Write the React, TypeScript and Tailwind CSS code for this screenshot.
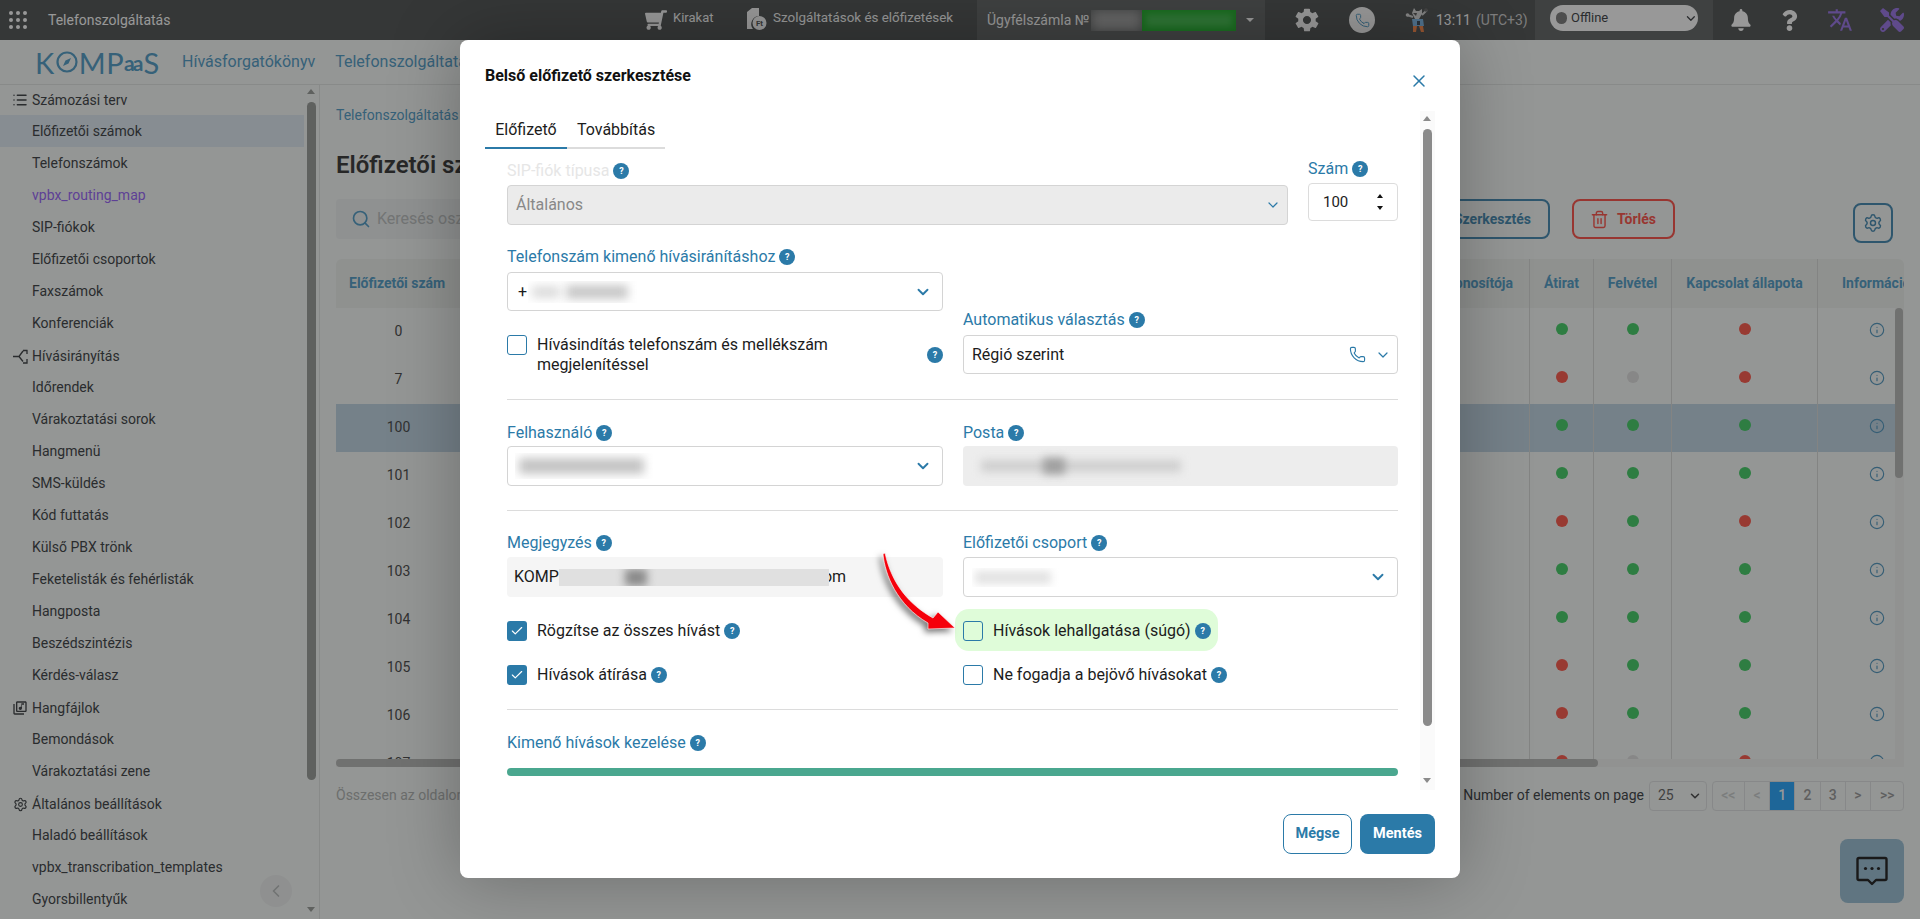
import React from "react";
import { Check, ChevronDown, ChevronLeft, Info, List, Phone, Search, Settings, Trash2, X } from "lucide-react";
import { FaBell, FaQuestion, FaShoppingCart, FaTools } from "react-icons/fa";
import { IoMdSettings } from "react-icons/io";
import { MdOutlineLibraryMusic, MdTranslate } from "react-icons/md";

type Dot = "g" | "r" | "n";

const rows: { n: string; a: Dot; b: Dot; c: Dot }[] = [
  { n: "0", a: "g", b: "g", c: "r" },
  { n: "7", a: "r", b: "n", c: "r" },
  { n: "100", a: "g", b: "g", c: "g" },
  { n: "101", a: "g", b: "g", c: "g" },
  { n: "102", a: "r", b: "g", c: "r" },
  { n: "103", a: "g", b: "g", c: "g" },
  { n: "104", a: "g", b: "g", c: "g" },
  { n: "105", a: "r", b: "g", c: "g" },
  { n: "106", a: "r", b: "g", c: "g" },
  { n: "107", a: "r", b: "n", c: "r" },
];

function StatusDot({ v }: { v: Dot }) {
  const cls = v === "g" ? "bg-[#2ac852]" : v === "r" ? "bg-[#ff4232]" : "bg-[#dcdcdc]";
  return <span className={`block h-3 w-3 rounded-full ${cls}`} />;
}

function Help() {
  return (
    <span className="flex h-4 w-4 shrink-0 items-center justify-center rounded-full bg-[#2b7aa8] text-[9px] font-bold leading-none text-white">
      ?
    </span>
  );
}

function Label({ children, muted }: { children: React.ReactNode; muted?: boolean }) {
  return (
    <div className={`flex h-5 items-center gap-1 text-[16px] leading-5 ${muted ? "text-[#e6e6e6]" : "text-[#2b7aa8]"}`}>
      <span>{children}</span>
      <Help />
    </div>
  );
}

function Smudge({ className, children }: { className: string; children: React.ReactNode }) {
  return <div className={`relative z-10 overflow-hidden ${className}`}>{children}</div>;
}

function Chev({ thin }: { thin?: boolean }) {
  return <ChevronDown className="text-[#2b7aa8]" size={thin ? 16 : 18} strokeWidth={thin ? 1.8 : 2.5} />;
}

function Box({ checked }: { checked?: boolean }) {
  return checked ? (
    <span className="flex h-5 w-5 shrink-0 items-center justify-center rounded-[3px] bg-[#2b7aa8] text-white">
      <Check size={14} strokeWidth={2} />
    </span>
  ) : (
    <span className="block h-5 w-5 shrink-0 rounded-[3px] border border-[#2b7aa8]" />
  );
}

function SideItem({ children, active, purple }: { children: React.ReactNode; active?: boolean; purple?: boolean }) {
  return (
    <div
      className={`flex h-8 items-center pl-8 text-[14px] ${active ? "bg-[#dce8f2]" : ""} ${purple ? "text-[#8a4ef8]" : "text-[#22262a]"}`}
    >
      {children}
    </div>
  );
}

function SideHead({ icon, children, first }: { icon: React.ReactNode; children: React.ReactNode; first?: boolean }) {
  return (
    <div className={`flex h-[30px] items-center text-[14px] text-[#22262a] ${first ? "" : "mt-[2px]"}`}>
      <span className="flex w-8 shrink-0 justify-end pr-[4px]">{icon}</span>
      {children}
    </div>
  );
}

function Page({ children, w, active, faint }: { children: React.ReactNode; w: string; active?: boolean; faint?: boolean }) {
  return (
    <div
      className={`flex items-center justify-center border-r border-[#dcdfe0] text-[14px] font-medium last:border-r-0 ${w} ${
        active ? "bg-[#0a9aff] text-white" : faint ? "text-[#c4c8c8]" : "text-[#8c8c8c]"
      }`}
    >
      {children}
    </div>
  );
}

function Mascot() {
  return (
    <svg width="24" height="28" viewBox="0 0 24 28" className="shrink-0">
      <path d="M2 9l6 2M22 4l-5 5" stroke="#d0d0d0" strokeWidth="2" />
      <circle cx="2.5" cy="9" r="1.8" fill="#d8d8d8" />
      <circle cx="21" cy="4" r="1.8" fill="#555" />
      <path d="M7 7l2-5 2 3h3l3-2 0 5-3 5h-4z" fill="#d8d8d8" />
      <path d="M8 7h4l-1 3z" fill="#444" />
      <path d="M7 13h11l1 7H8z" fill="#6fb0e6" />
      <path d="M12 15h3v4h-3z" fill="#234" />
      <path d="M8 20h4l-1 6H8zM14 20h4l1 6h-3z" fill="#ff7a30" />
    </svg>
  );
}

function TopBar() {
  return (
    <header className="flex h-10 shrink-0 items-stretch whitespace-nowrap bg-[#383c3c] text-white">
      <div className="ml-[9px] grid h-10 w-[18px] shrink-0 grid-cols-3 content-center gap-[3px]">
        {Array.from({ length: 9 }).map((_, i) => (
          <span key={i} className="h-1 w-1 rounded-full bg-white" />
        ))}
      </div>
      <div className="ml-[21px] flex w-[122px] items-center text-[14px]">Telefonszolgáltatás</div>
      <div className="ml-[475px] flex items-center">
        <FaShoppingCart size={22} className="-scale-x-100" />
      </div>
      <div className="ml-[6px] flex w-[41px] items-center pb-[4px] text-[13px]">Kirakat</div>
      <div className="ml-[31px] flex items-center">
        <svg width="22" height="24" viewBox="0 0 22 24" fill="white">
          <path d="M2 4l5-4h7v8a8 8 0 0 0-6 13H2z" />
          <circle cx="14.5" cy="15" r="7" />
          <text x="14.5" y="18" fontSize="8" fontWeight="700" textAnchor="middle" fill="#383c3c">Ft</text>
        </svg>
      </div>
      <div className="ml-[6px] flex w-[174px] items-center pb-[4px] text-[13.4px]">Szolgáltatások és előfizetések</div>
      <div className="ml-[30px] flex w-[288px] shrink-0 items-center bg-[#4c5050] pl-[10px] text-[14px]">
        <span className="w-[104px] overflow-hidden">Ügyfélszámla №</span>
        <Smudge className="h-[21px] w-[51px] shrink-0">
          <div className="absolute inset-0 bg-[#9a9a9a] blur-[6px]" />
        </Smudge>
        <Smudge className="h-[21px] w-[94px] shrink-0 bg-[#00a40c]">
          <div className="absolute left-[4px] right-[4px] top-[4px] h-[13px] bg-[#2ab838] blur-[3px]" />
        </Smudge>
        <span className="ml-[10px] h-0 w-0 border-x-[4px] border-t-[4px] border-x-transparent border-t-white" />
      </div>
      <div className="ml-[28px] flex items-center">
        <IoMdSettings size={28} />
      </div>
      <div className="ml-[28px] flex items-center">
        <span className="flex h-[26px] w-[26px] items-center justify-center rounded-full bg-white">
          <Phone size={15} strokeWidth={1.6} className="text-[#3a90c0]" />
        </span>
      </div>
      <div className="ml-[30px] flex items-center">
        <Mascot />
      </div>
      <div className="ml-[7px] flex w-[85px] items-center text-[14px]">
        13:11 <span className="ml-[5px] text-[#c8c8c8]">(UTC+3)</span>
      </div>
      <div className="ml-[14px] flex w-[178px] shrink-0 items-start bg-[#4c5050] pl-[15px] pt-[5px]">
        <div className="flex h-[26px] w-[148px] items-center rounded-full bg-white pl-[6px] text-[13px] text-[#22262a]">
          <span className="h-3 w-3 rounded-full bg-[#6a6a6a]" />
          <span className="ml-[4px]">Offline</span>
          <ChevronDown size={15} strokeWidth={2.2} className="ml-[76px] text-[#22262a]" />
        </div>
      </div>
      <div className="ml-[17px] flex items-center">
        <FaBell size={22} />
      </div>
      <div className="ml-[27px] flex items-center">
        <FaQuestion size={21} />
      </div>
      <div className="ml-[27px] flex items-center text-[#8c62e4]">
        <MdTranslate size={26} />
      </div>
      <div className="ml-[27px] flex items-center text-[#8c62e4]">
        <FaTools size={24} />
      </div>
    </header>
  );
}

function SubHeader() {
  return (
    <div className="flex h-[45px] shrink-0 items-center border-b border-[#dfe3e1] text-[16px] text-[#3a90c0]">
      <div className="ml-[35px] flex h-[44px] w-[125px] items-center font-[Lato,sans-serif] text-[29px] font-normal leading-none tracking-[0.5px] text-[#3a90c0]">
        <span>K</span>
        <svg width="22" height="22" viewBox="0 0 22 22" className="mx-[1px] shrink-0" fill="none" stroke="#3a90c0" strokeWidth="2.2">
          <circle cx="11" cy="11" r="9.5" />
          <path d="M15 7l-2.5 5.5L7 15l2.5-5.5z" fill="#3a90c0" stroke="none" />
        </svg>
        <span>MP</span>
        <span className="text-[21px] font-bold tracking-[-2px]">aa</span>
        <span className="ml-[2px]">S</span>
      </div>
      <div className="ml-[22px]">Hívásforgatókönyv</div>
      <div className="ml-[20px]">Telefonszolgáltatás</div>
    </div>
  );
}

function Sidebar() {
  return (
    <aside className="relative w-[320px] shrink-0 overflow-hidden border-r border-[#dfe3e1]">
      <div className="w-[304px]">
        <SideHead first icon={<List size={16} strokeWidth={2.2} />}>Számozási terv</SideHead>
        <SideItem active>Előfizetői számok</SideItem>
        <SideItem>Telefonszámok</SideItem>
        <SideItem purple>vpbx_routing_map</SideItem>
        <SideItem>SIP-fiókok</SideItem>
        <SideItem>Előfizetői csoportok</SideItem>
        <SideItem>Faxszámok</SideItem>
        <SideItem>Konferenciák</SideItem>
        <SideHead
          icon={
            <svg width="15" height="15" viewBox="0 0 15 15" fill="none" stroke="currentColor" strokeWidth="1.3">
              <path d="M0 7.5h6l4-5.5M10 1.5h4.5M14 1v4M6 7.5l4 5M14 10v4h-4" />
            </svg>
          }
        >
          Hívásirányítás
        </SideHead>
        <SideItem>Időrendek</SideItem>
        <SideItem>Várakoztatási sorok</SideItem>
        <SideItem>Hangmenü</SideItem>
        <SideItem>SMS-küldés</SideItem>
        <SideItem>Kód futtatás</SideItem>
        <SideItem>Külső PBX trönk</SideItem>
        <SideItem>Feketelisták és fehérlisták</SideItem>
        <SideItem>Hangposta</SideItem>
        <SideItem>Beszédszintézis</SideItem>
        <SideItem>Kérdés-válasz</SideItem>
        <SideHead icon={<MdOutlineLibraryMusic size={16} />}>Hangfájlok</SideHead>
        <SideItem>Bemondások</SideItem>
        <SideItem>Várakoztatási zene</SideItem>
        <SideHead icon={<Settings size={15} strokeWidth={1.8} />}>Általános beállítások</SideHead>
        <SideItem>Haladó beállítások</SideItem>
        <SideItem>vpbx_transcribation_templates</SideItem>
        <SideItem>Gyorsbillentyűk</SideItem>
      </div>
      <span className="absolute left-[307px] top-[4px] h-0 w-0 border-x-[4.5px] border-b-[5px] border-x-transparent border-b-[#8c908c]" />
      <span className="absolute left-[307px] top-[17px] h-[678px] w-[9px] rounded-[5px] bg-[#8c908c]" />
      <span className="absolute bottom-[7px] left-[307px] h-0 w-0 border-x-[4.5px] border-t-[5px] border-x-transparent border-t-[#8c908c]" />
      <span className="absolute left-[260px] top-[790px] flex h-8 w-8 items-center justify-center rounded-full bg-[#ecefee] text-[#b0b4b4]">
        <ChevronLeft size={20} />
      </span>
    </aside>
  );
}

function DataTable() {
  return (
    <div className="relative mt-5 h-[508px] w-[1568px] overflow-hidden rounded-t-md">
      <div className="flex h-[49px] items-stretch bg-[#ecf0ec] text-[14px] font-bold text-[#3a90c0]">
        <div className="flex w-[125px] items-center pl-[13px]">Előfizetői szám</div>
        <div className="flex flex-1 items-center justify-end pr-4">Hívó azonosítója</div>
        <div className="flex w-[64px] items-center justify-center border-l border-[#d4d6d4]">Átirat</div>
        <div className="flex w-[78px] items-center justify-center border-l border-[#d4d6d4]">Felvétel</div>
        <div className="flex w-[146px] items-center justify-center border-l border-[#d4d6d4]">Kapcsolat állapota</div>
        <div className="flex w-[87px] items-center overflow-hidden whitespace-nowrap border-l border-[#d4d6d4] pl-6">Információ</div>
      </div>
      {rows.map((r) => (
        <div key={r.n} className={`flex h-12 items-stretch text-[14px] text-[#303030] ${r.n === "100" ? "bg-[#b8d0e0]" : ""}`}>
          <div className="flex w-[125px] items-center justify-center pb-[2px]">{r.n}</div>
          <div className="flex-1" />
          <div className="flex w-[64px] items-center justify-center border-l border-[#d4d6d4] pb-[6px]"><StatusDot v={r.a} /></div>
          <div className="flex w-[78px] items-center justify-center border-l border-[#d4d6d4] pb-[6px]"><StatusDot v={r.b} /></div>
          <div className="flex w-[146px] items-center justify-center border-l border-[#d4d6d4] pb-[6px]"><StatusDot v={r.c} /></div>
          <div className="flex w-[87px] items-center border-l border-[#d4d6d4] pb-[4px] pl-[51px]">
            <Info size={16} className="text-[#3a8ab8]" strokeWidth={1.7} />
          </div>
        </div>
      ))}
      <div className="absolute bottom-0 left-0 right-0 h-2 bg-[#f0f2f0]" />
      <div className="absolute bottom-0 left-0 h-2 w-[1262px] rounded bg-[#aeb0ae]" />
      <div className="absolute bottom-2 right-0 top-[49px] w-[9px] bg-[#f0f2f0]" />
      <div className="absolute right-[1px] top-[49px] h-[170px] w-2 rounded bg-[#aeb0ae]" />
    </div>
  );
}

function Main() {
  return (
    <main className="min-w-0 flex-1 px-4">
      <div className="mt-[21px] h-[18px] text-[14px] leading-[18px] text-[#3a90c0]">Telefonszolgáltatás</div>
      <div className="mt-[25px] h-8 text-[24px] font-semibold leading-8 text-[#1c1c1c]">Előfizetői számok</div>
      <div className="mt-[18px] flex h-10 items-start">
        <div className="flex h-10 w-[600px] items-center rounded bg-[#ecf0f0] pl-[15px] text-[16px] text-[#b4b8b8]">
          <Search size={20} className="text-[#3a90c0]" />
          <span className="ml-[6px]">Keresés oszlopok szerint</span>
        </div>
        <div className="ml-auto flex h-10 w-[150px] items-center justify-end rounded-lg border-2 border-[#2b7aa8] pr-[17px] text-[14px] font-bold text-[#2b7aa8]">
          Szerkesztés
        </div>
        <div className="ml-[22px] flex h-10 w-[103px] items-center rounded-lg border-2 border-[#ff3b30] pl-[16px] text-[14px] font-bold text-[#ff3b30]">
          <Trash2 size={19} strokeWidth={1.8} />
          <span className="ml-[8px]">Törlés</span>
        </div>
        <div className="ml-[178px] mr-[11px] mt-1 flex h-10 w-10 items-center justify-center rounded-lg border-2 border-[#2b7aa8] text-[#2b7aa8]">
          <Settings size={20} strokeWidth={1.7} />
        </div>
      </div>
      <DataTable />
      <div className="mt-[13px] flex h-[31px] items-center text-[14px]">
        <span className="text-[#a6aaa8]">Összesen az oldalon: 25</span>
        <span className="ml-auto text-[#22262a]">Number of elements on page</span>
        <div className="ml-[5px] flex h-[30px] w-[58px] items-center justify-between rounded border border-[#dcdfe0] pl-2 pr-[4px] text-[#505050]">
          25
          <ChevronDown size={14} strokeWidth={2.6} className="text-[#303030]" />
        </div>
        <div className="ml-[5px] flex h-[30px] w-[192px] overflow-hidden rounded border border-[#dcdfe0]">
          <Page w="w-[32px]" faint>&lt;&lt;</Page>
          <Page w="w-[26px]" faint>&lt;</Page>
          <Page w="w-[25px]" active>1</Page>
          <Page w="w-[26px]">2</Page>
          <Page w="w-[25px]">3</Page>
          <Page w="w-[26px]">&gt;</Page>
          <Page w="w-[32px]">&gt;&gt;</Page>
        </div>
      </div>
    </main>
  );
}

function FormSelect({ children, pr }: { children: React.ReactNode; pr: string }) {
  return (
    <div className={`mt-[5px] flex h-[39px] items-center justify-between rounded border border-[#d4d4d4] pl-[8px] text-[16px] text-[#1c1c1c] ${pr}`}>
      {children}
    </div>
  );
}

function Dialog() {
  return (
    <div className="absolute left-[460px] top-10 z-30 flex h-[838px] w-[1000px] flex-col rounded-lg bg-white shadow-[0_0_70px_rgba(0,0,0,0.28)]">
      <div className="h-[71px] shrink-0 pl-[25px] pt-[27px] text-[16px] font-bold leading-[18px] text-[#111]">
        Belső előfizető szerkesztése
      </div>
      <X size={20} strokeWidth={1.8} className="absolute left-[949px] top-[31px] text-[#2b7aa8]" />
      <div className="ml-[25px] flex h-[38px] w-[180px] shrink-0 border-b-2 border-[#dcdcdc] text-[16px] text-[#1c1c1c]">
        <div className="-mb-[2px] flex w-[82px] items-center justify-center border-b-2 border-[#2b7aa8] pt-[1px]">Előfizető</div>
        <div className="ml-[10px] flex items-center pt-[1px]">Továbbítás</div>
      </div>
      <div className="h-[641px] overflow-hidden pl-[47px] pr-[62px]">
        <div className="mt-[12px] flex gap-5">
          <div className="w-[781px]">
            <Label muted>SIP-fiók típusa</Label>
            <div className="mt-[4px] flex h-10 items-center justify-between rounded border border-[#d4d4d4] bg-[#ebebeb] pl-[8px] pr-[6px] text-[16px] text-[#888]">
              Általános
              <Chev thin />
            </div>
          </div>
          <div className="-mt-[2px] w-[90px]">
            <Label>Szám</Label>
            <div className="mt-[4px] flex h-[38px] items-center justify-between rounded border border-[#dcdcdc] pl-[14px] pr-[14px] text-[15px] text-[#1c1c1c]">
              100
              <span className="flex flex-col gap-2">
                <span className="h-0 w-0 border-x-[3.5px] border-b-[4px] border-x-transparent border-b-[#111]" />
                <span className="h-0 w-0 border-x-[3.5px] border-t-[4px] border-x-transparent border-t-[#111]" />
              </span>
            </div>
          </div>
        </div>
        <div className="mt-[22px] grid grid-cols-[436px_435px] gap-x-5">
          <div>
            <Label>Telefonszám kimenő hívásiránításhoz</Label>
            <FormSelect pr="pr-[10px]">
              <div className="flex items-center pl-[2px]">
                +
                <Smudge className="ml-[1px] h-[22px] w-[110px]">
                  <div className="absolute left-[4px] top-[5px] h-[12px] w-[28px] bg-[#dcdcdc] blur-[5px]" />
                  <div className="absolute left-[38px] top-[4px] h-[14px] w-[62px] bg-[#c8c8c8] blur-[5px]" />
                </Smudge>
              </div>
              <Chev />
            </FormSelect>
            <div className="mt-[24px] flex h-10 items-start">
              <Box />
              <div className="ml-[10px] w-[300px] text-[16px] leading-5 text-[#1c1c1c]">
                Hívásindítás telefonszám és mellékszám megjelenítéssel
              </div>
              <div className="ml-auto mt-3">
                <Help />
              </div>
            </div>
          </div>
          <div className="mt-[63px]">
            <Label>Automatikus választás</Label>
            <FormSelect pr="pr-[6px]">
              Régió szerint
              <span className="flex items-center gap-[9px]">
                <Phone size={17} strokeWidth={1.6} className="text-[#2b7aa8]" />
                <Chev thin />
              </span>
            </FormSelect>
          </div>
        </div>
        <div className="mt-6 h-px bg-[#dcdcdc]" />
        <div className="mt-[23px] grid grid-cols-[436px_435px] gap-x-5">
          <div>
            <Label>Felhasználó</Label>
            <div className="mt-[3px] flex h-10 items-center justify-between rounded border border-[#d4d4d4] pl-[7px] pr-[10px]">
              <Smudge className="h-[26px] w-[140px]">
                <div className="absolute left-[4px] top-[5px] h-[16px] w-[125px] bg-[#c4c4c4] blur-[5px]" />
              </Smudge>
              <Chev />
            </div>
          </div>
          <div>
            <Label>Posta</Label>
            <div className="relative mt-[3px] h-10 overflow-hidden rounded bg-[#ededed]">
              <div className="absolute left-[18px] top-[14px] h-[12px] w-[200px] bg-[#cfcfcf] blur-[4px]" />
              <div className="absolute left-[80px] top-[12px] h-[16px] w-[22px] bg-[#a0a0a0] blur-[4px]" />
            </div>
          </div>
        </div>
        <div className="mt-6 h-px bg-[#dcdcdc]" />
        <div className="mt-[22px] grid grid-cols-[436px_435px] gap-x-5">
          <div>
            <Label>Megjegyzés</Label>
            <div className="mt-[4px] flex h-10 items-center rounded bg-[#f5f5f5] pl-[7px] text-[16px] text-[#1c1c1c]">
              KOMP
              <Smudge className="h-[17px] w-[270px] shrink-0 bg-[#e0e0e0]">
                <div className="absolute left-[66px] top-0 h-[17px] w-[22px] bg-[#8a8a8a] blur-[4px]" />
              </Smudge>
              <span className="-ml-[6px]">om</span>
            </div>
          </div>
          <div>
            <Label>Előfizetői csoport</Label>
            <div className="mt-[4px] flex h-10 items-center justify-between rounded border border-[#d4d4d4] pl-[8px] pr-[10px]">
              <Smudge className="h-[19px] w-[90px]">
                <div className="absolute left-[3px] top-[3px] h-[13px] w-[76px] bg-[#e2e2e2] blur-[4px]" />
              </Smudge>
              <Chev />
            </div>
          </div>
        </div>
        <div className="mt-[12px] grid grid-cols-[436px_435px] gap-x-5">
          <div className="flex h-[42px] items-center pt-[2px] text-[16px] text-[#1c1c1c]">
            <Box checked />
            <span className="ml-[10px] mr-[4px]">Rögzítse az összes hívást</span>
            <Help />
          </div>
          <div className="-ml-2 flex h-[42px] w-[263px] items-center rounded-[14px] bg-[#dffcd9] pl-2 pt-[2px] text-[16px] text-[#1c1c1c]">
            <Box />
            <span className="ml-[10px] mr-[4px]">Hívások lehallgatása (súgó)</span>
            <Help />
          </div>
          <div className="mt-[14px] flex h-5 items-center text-[16px] text-[#1c1c1c]">
            <Box checked />
            <span className="ml-[10px] mr-[4px]">Hívások átírása</span>
            <Help />
          </div>
          <div className="mt-[14px] flex h-5 items-center text-[16px] text-[#1c1c1c]">
            <Box />
            <span className="ml-[10px] mr-[4px]">Ne fogadja a bejövő hívásokat</span>
            <Help />
          </div>
        </div>
        <div className="mt-6 h-px bg-[#dcdcdc]" />
        <div className="mt-[23px]">
          <Label>Kimenő hívások kezelése</Label>
        </div>
        <div className="mt-[15px] h-2 rounded bg-[#4aa78f]" />
      </div>
      <div className="flex justify-end gap-2 pr-[25px] pt-6">
        <div className="flex h-10 w-[69px] items-center justify-center rounded-lg border border-[#2b7aa8] text-[14.5px] font-bold text-[#2b7aa8]">
          Mégse
        </div>
        <div className="flex h-10 w-[75px] items-center justify-center rounded-lg bg-[#2b7aa8] text-[14.5px] font-bold text-white">
          Mentés
        </div>
      </div>
      <div className="absolute left-[960px] top-[71px] h-[679px] w-[15px] bg-[#fafafa]">
        <span className="absolute left-[3px] top-[5px] h-0 w-0 border-x-[4.5px] border-b-[5px] border-x-transparent border-b-[#8a8a8a]" />
        <span className="absolute left-[3px] top-[18px] h-[597px] w-[9px] rounded-[5px] bg-[#8a8a8a]" />
        <span className="absolute bottom-[7px] left-[3px] h-0 w-0 border-x-[4.5px] border-t-[5px] border-x-transparent border-t-[#8a8a8a]" />
      </div>
      <svg
        width="100"
        height="100"
        viewBox="0 0 100 100"
        className="absolute left-[410px] top-[505px] z-20 drop-shadow-[-3px_3px_3px_rgba(0,0,0,0.55)]"
      >
        <path d="M13 9C15 30 27 60 58 78L58 84L85 83L68 67L63 73C40 60 22 40 15 8Z" fill="#f5000b" stroke="#fff" strokeWidth="0.6" />
      </svg>
    </div>
  );
}

export default function App() {
  return (
    <div className="relative flex h-[919px] w-[1920px] flex-col overflow-hidden bg-[#f6faf8] font-[Roboto,sans-serif]">
      <TopBar />
      <SubHeader />
      <div className="flex min-h-0 flex-1">
        <Sidebar />
        <Main />
      </div>
      <div className="absolute bottom-4 right-4 flex h-16 w-16 items-center justify-center rounded-lg bg-[#8eb8d0]">
        <svg width="32" height="30" viewBox="0 0 32 30" fill="none" stroke="#000" strokeWidth="2.4" strokeLinejoin="round">
          <path d="M3 2h26a1.5 1.5 0 0 1 1.5 1.5v19a1.5 1.5 0 0 1-1.5 1.5h-9l-4 4-4-4H3a1.5 1.5 0 0 1-1.5-1.5v-19A1.5 1.5 0 0 1 3 2z" />
          <circle cx="9.5" cy="12.5" r="1.6" fill="#000" stroke="none" />
          <circle cx="16" cy="12.5" r="1.6" fill="#000" stroke="none" />
          <circle cx="22.5" cy="12.5" r="1.6" fill="#000" stroke="none" />
        </svg>
      </div>
      <div className="absolute inset-0 z-20 bg-[#323232]/50" />
      <Dialog />
    </div>
  );
}
